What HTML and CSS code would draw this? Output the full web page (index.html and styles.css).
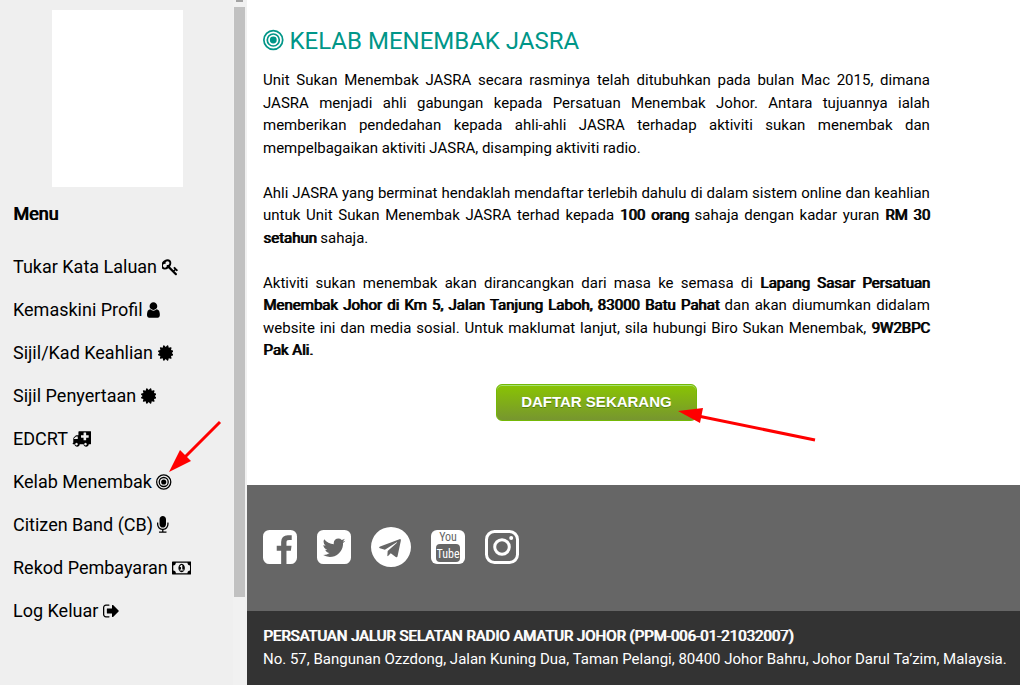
FILE: index.html
```
<!DOCTYPE html>
<html lang="ms">
<head>
    <meta charset="UTF-8">
    <meta name="viewport" content="width=device-width, initial-scale=1.0">
    <title>Kelab Menembak JASRA</title>
    <link rel="stylesheet" href="styles.css">
</head>
<body>
    <!-- Sidebar -->
    <aside class="sidebar">
        <nav class="menu">
            <div class="photo"></div>
            <h2>Menu</h2>
            <a href="#">Tukar Kata Laluan <svg class="icon" viewBox="96 0 1664 1792"><path d="M832 512q0-80-56-136t-136-56-136 56-56 136q0 42 19 83-41-19-83-19-80 0-136 56t-56 136 56 136 136 56 136-56 56-136q0-42-19-83 41 19 83 19 80 0 136-56t56-136zm851 704q0 17-49 66t-66 49q-9 0-28.500-16t-36.500-33-38.500-40-24.500-26l-96 96 220 220q28 28 28 68 0 42-39 81t-81 39q-40 0-68-28l-671-671q-176 131-365 131-163 0-265.500-102.500t-102.500-265.500q0-160 95-313t248-248 313-95q163 0 265.500 102.500t102.500 265.500q0 189-131 365l355 355 96-96q-3-3-26-24.500t-40-38.500-33-36.500-16-28.500q0-17 49-66t66-49q13 0 23 10 6 6 46 44.500t82 79.500 86.500 86 73 78 28.500 41z"/></svg></a>
            <a href="#">Kemaskini Profil <svg class="icon" viewBox="256 0 1280 1792"><path d="M1536 1399q0 109-62.500 187t-150.500 78h-854q-88 0-150.500-78t-62.500-187q0-85 8.500-160.500t31.500-152 58.500-131 94-89 134.500-34.500q131 128 313 128t313-128q76 0 134.500 34.500t94 89 58.500 131 31.500 152 8.500 160.500zm-256-887q0 159-112.500 271.500t-271.500 112.500-271.500-112.500-112.500-271.500 112.500-271.500 271.500-112.500 271.500 112.500 112.500 271.500z"/></svg></a>
            <a href="#">Sijil/Kad Keahlian <svg class="icon" viewBox="128 0 1536 1792"><path id="certificate" d="M1504 896l138 135q30 28 20 70-12 41-52 51l-188 48 53 186q12 41-19 70-29 31-70 19l-186-53-48 188q-10 40-51 52-12 2-19 2-31 0-51-22l-135-138-135 138q-28 30-70 20-41-11-51-52l-48-188-186 53q-41 12-70-19-31-29-19-70l53-186-188-48q-40-10-52-51-10-42 20-70l138-135-138-135q-30-28-20-70 12-41 52-51l188-48-53-186q-12-41 19-70 29-31 70-19l186 53 48-188q10-41 51-51 41-12 70 19l135 139 135-139q29-30 70-19 41 10 51 51l48 188 186-53q41-12 70 19 31 29 19 70l-53 186 188 48q40 10 52 51 10 42-20 70z"/></svg></a>
            <a href="#">Sijil Penyertaan <svg class="icon" viewBox="128 0 1536 1792"><use href="#certificate"/></svg></a>
            <a href="#">EDCRT <svg class="icon" viewBox="0 0 1920 1792"><path d="M576 1408q0-52-38-90t-90-38-90 38-38 90 38 90 90 38 90-38 38-90zm-384-512h384v-256h-158q-14 2-22 9l-195 195q-7 12-9 22v30zm1280 512q0-52-38-90t-90-38-90 38-38 90 38 90 90 38 90-38 38-90zm192-672v-192q0-14-9-23t-23-9h-224v-224q0-14-9-23t-23-9h-192q-14 0-23 9t-9 23v224h-224q-14 0-23 9t-9 23v192q0 14 9 23t23 9h224v224q0 14 9 23t23 9h192q14 0 23-9t9-23v-224h224q14 0 23-9t9-23zm256-480v1088q0 26-19 45t-45 19h-192q0 106-75 181t-181 75-181-75-75-181h-384q0 106-75 181t-181 75-181-75-75-181h-128q-26 0-45-19t-19-45 19-45 45-19v-416q0-26 13-58t32-51l198-198q19-19 51-32t58-13h160v-320q0-26 19-45t45-19h1152q26 0 45 19t19 45z"/></svg></a>
            <a href="#" class="current">Kelab Menembak <svg class="icon" viewBox="128 0 1536 1792"><g id="bullseye"><circle cx="896" cy="896" r="256"/><circle cx="896" cy="896" r="448" fill="none" stroke="currentColor" stroke-width="128"/><circle cx="896" cy="896" r="704" fill="none" stroke="currentColor" stroke-width="128"/></g></svg><svg class="arrow arrow-menu" viewBox="0 0 54 54"><path d="M52 2L14 40" stroke="#f00" stroke-width="3"/><path d="M1 52L12 30L23 41z" fill="#f00"/></svg></a>
            <a href="#">Citizen Band (CB) <svg class="icon" viewBox="320 0 1152 1792"><path d="M1472 704v128q0 221-147.500 384.500t-364.500 187.500v132h256q26 0 45 19t19 45-19 45-45 19h-640q-26 0-45-19t-19-45 19-45 45-19h256v-132q-217-24-364.500-187.500t-147.500-384.500v-128q0-26 19-45t45-19 45 19 19 45v128q0 185 131.500 316.500t316.500 131.500 316.500-131.500 131.500-316.500v-128q0-26 19-45t45-19 45 19 19 45zm-256-384v512q0 132-94 226t-226 94-226-94-94-226v-512q0-132 94-226t226-94 226 94 94 226z"/></svg></a>
            <a href="#">Rekod Pembayaran <svg class="icon" viewBox="0 0 1920 1792"><path d="M768 1152h384v-96h-128v-448h-114l-148 137 77 80q42-37 55-57h2v288h-128v96zm512-256q0 70-21 142t-59.500 134-101.500 101-138 39-138-39-101.500-101-59.500-134-21-142 21-142 59.500-134 101.500-101 138-39 138 39 101.500 101 59.500 134 21 142zm512 256v-512q-106 0-181-75t-75-181h-1152q0 106-75 181t-181 75v512q106 0 181 75t75 181h1152q0-106 75-181t181-75zm128-832v1152q0 26-19 45t-45 19h-1792q-26 0-45-19t-19-45v-1152q0-26 19-45t45-19h1792q26 0 45 19t19 45z"/></svg></a>
            <a href="#">Log Keluar <svg class="icon" viewBox="64 0 1568 1792"><path d="M704 1440q0 4 1 20t.5 26.500-3 23.500-10 19.500-20.500 6.500h-320q-119 0-203.500-84.500t-84.500-203.500v-704q0-119 84.500-203.500t203.500-84.500h320q13 0 22.500 9.500t9.500 22.500q0 4 1 20t.5 26.500-3 23.500-10 19.500-20.500 6.500h-320q-66 0-113 47t-47 113v704q0 66 47 113t113 47h312l11.500 1 11.500 3 8 5.500 7 9 2 13.500zm928-544q0 26-19 45l-544 544q-19 19-45 19t-45-19-19-45v-288h-448q-26 0-45-19t-19-45v-384q0-26 19-45t45-19h448v-288q0-26 19-45t45-19 45 19l544 544q19 19 19 45z"/></svg></a>
        </nav>
        <div class="scrollbar">
            <div class="scroll-up"></div>
            <div class="thumb"></div>
        </div>
    </aside>

    <!-- Page content -->
    <div class="page">
        <main class="content">
            <h1><svg class="icon" viewBox="128 0 1536 1792"><use href="#bullseye"/></svg> KELAB MENEMBAK JASRA</h1>
            <div class="article">
                <p>Unit Sukan Menembak JASRA secara rasminya telah ditubuhkan pada bulan Mac 2015, dimana JASRA menjadi ahli gabungan kepada Persatuan Menembak Johor. Antara tujuannya ialah memberikan pendedahan kepada ahli-ahli JASRA terhadap aktiviti sukan menembak dan mempelbagaikan aktiviti JASRA, disamping aktiviti radio.</p>
                <p>Ahli JASRA yang berminat hendaklah mendaftar terlebih dahulu di dalam sistem online dan keahlian untuk Unit Sukan Menembak JASRA terhad kepada <b>100 orang</b> sahaja dengan kadar yuran <b>RM 30 setahun</b> sahaja.</p>
                <p>Aktiviti sukan menembak akan dirancangkan dari masa ke semasa di <b>Lapang Sasar Persatuan Menembak Johor di Km 5, Jalan Tanjung Laboh, 83000 Batu Pahat</b> dan akan diumumkan didalam website ini dan media sosial. Untuk maklumat lanjut, sila hubungi Biro Sukan Menembak, <b>9W2BPC Pak Ali.</b></p>
                <div class="action">
                    <button type="button">DAFTAR SEKARANG</button>
                    <svg class="arrow arrow-button" viewBox="0 0 140 36"><path d="M137 32L20 8" stroke="#f00" stroke-width="3"/><path d="M0 3L25 0L22 15z" fill="#f00"/></svg>
                </div>
            </div>
        </main>

        <section class="social">
            <a href="#" aria-label="Facebook"><svg viewBox="128 0 1536 1792"><path d="M1376 128q119 0 203.500 84.500t84.500 203.500v960q0 119-84.500 203.500t-203.500 84.500h-188v-595h199l30-232h-229v-148q0-56 23.500-84t91.500-28l122-1v-207q-63-9-178-9-136 0-217.500 80t-81.500 226v171h-200v232h200v595h-532q-119 0-203.500-84.500t-84.500-203.500v-960q0-119 84.500-203.500t203.500-84.500h960z"/></svg></a>
            <a href="#" aria-label="Twitter"><svg viewBox="128 0 1536 1792"><path d="M1408 610q-56 25-121 34 68-40 93-117-65 38-134 51-61-66-153-66-87 0-148.500 61.500t-61.500 148.500q0 29 5 48-129-7-242-65t-192-155q-29 50-29 106 0 114 91 175-47-1-100-26v2q0 75 50 133.500t123 72.500q-29 8-51 8-13 0-39-4 21 63 74.500 104t121.500 42q-116 90-261 90-26 0-50-3 148 94 322 94 112 0 210-35.500t168-95 120.500-137 75-162 24.500-168.500q0-18-1-27 63-45 105-109zm256-194v960q0 119-84.500 203.500t-203.500 84.500h-960q-119 0-203.500-84.500t-84.500-203.500v-960q0-119 84.500-203.500t203.500-84.500h960q119 0 203.500 84.500t84.500 203.500z"/></svg></a>
            <a href="#" aria-label="Telegram"><svg class="round" viewBox="0 0 1792 1792"><path d="M1189 1307l147-693q9-44-10.500-63t-51.500-7l-864 333q-29 11-39.500 25t-2.500 26.500 32 19.500l221 69 513-323q21-14 32-6 7 5-4 15l-415 375-16 228q23 0 45-22l108-104 224 165q64 36 81-38zm603-411q0 182-71 348t-191 286-286 191-348 71-348-71-286-191-191-286-71-348 71-348 191-286 286-191 348-71 348 71 286 191 191 286 71 348z"/></svg></a>
            <a href="#" aria-label="YouTube"><svg viewBox="0 0 34 40"><rect y="3" width="34" height="34" rx="6"/><rect x="5" y="17" width="24" height="18" rx="4" fill="#666"/><text class="you" x="17" y="14">You</text><text class="tube" x="17" y="31">Tube</text></svg></a>
            <a href="#" aria-label="Instagram"><svg viewBox="0 0 34 40"><rect x="1.500" y="4.500" width="31" height="31" rx="8" fill="none" stroke="#fff" stroke-width="3"/><circle cx="17" cy="20" r="7.300" fill="none" stroke="#fff" stroke-width="3"/><circle cx="26.200" cy="10.900" r="2"/></svg></a>
        </section>

        <footer>
            <b>PERSATUAN JALUR SELATAN RADIO AMATUR JOHOR (PPM-006-01-21032007)</b><br>
            No. 57, Bangunan Ozzdong, Jalan Kuning Dua, Taman Pelangi, 80400 Johor Bahru, Johor Darul Ta’zim, Malaysia.
        </footer>
    </div>
</body>
</html>
```
FILE: styles.css
```
* {
    box-sizing: border-box;
}

body {
    margin: 0;
    min-height: 100vh;
    display: flex;
    font-family: Roboto, sans-serif;
    font-size: 15px;
    line-height: 1.5;
    color: #000;
    background: #fff;
}

/* the heavier text keeps the regular letter widths */
b,
.menu h2 {
    font-weight: 400;
    text-shadow: 1px 0 0 currentColor;
}

.icon {
    height: 1em;
    vertical-align: -3px;
    fill: currentColor;
}

/* Sidebar */
.sidebar {
    width: 247px;
    flex-shrink: 0;
    display: flex;
    background: #efefef;
}

.menu {
    flex: 1;
    padding: 10px 0 0 13px;
    font-size: 18px;
}

.photo {
    width: 131px;
    height: 177px;
    margin-left: 39px;
    background: #fff;
}

.menu h2 {
    margin: 13px 0 18px;
    font-size: 18px;
}

.menu a {
    display: block;
    width: fit-content;
    padding: 8px 0;
    color: #000;
    text-decoration: none;
}

.menu .current {
    position: relative;
}

.scrollbar {
    width: 14px;
    padding: 0 2px 0 1px;
    background: #f1f1f1;
}

.scroll-up {
    width: 7px;
    height: 2px;
    margin: 0 2px 5px;
    background: #a3a3a3;
}

.thumb {
    height: 590px;
    background: #c1c1c1;
}

/* Page content */
.page {
    flex: 1;
    min-width: 0;
    display: flex;
    flex-direction: column;
}

.content {
    flex: 1;
    padding: 23px 16px 64px;
}

h1 {
    margin: 0 0 10px;
    font-size: 24px;
    font-weight: 400;
    color: #009688;
}

.article {
    width: 90%;
    text-align: justify;
}

.article p {
    margin: 0 0 1.5em;
}

.action {
    position: relative;
    width: fit-content;
    margin: 0 auto;
}

button {
    display: block;
    padding: 8px 24px 10px;
    border: 1px solid #74b807;
    border-radius: 6px;
    background: linear-gradient(#89c403, #77962f);
    box-shadow: inset 0 1px 0 #a4e271;
    color: #fff;
    font: bold 15px "Liberation Sans", sans-serif;
    text-shadow: 0 1px 0 #528009;
}

/* Pointers drawn over the page */
.arrow {
    position: absolute;
    fill: none;
}

.arrow-menu {
    left: 155px;
    top: -40px;
    width: 54px;
}

.arrow-button {
    left: 182px;
    top: 24px;
    width: 140px;
}

/* Social links */
.social {
    display: flex;
    gap: 20px;
    padding: 42px 16px;
    background: #666;
}

.social a {
    height: 42px;
}

.social svg {
    display: block;
    width: 34px;
    height: 40px;
    fill: #fff;
}

.social .round {
    width: 40px;
}

.social text {
    font-family: "Roboto Condensed", "Open Sans Condensed", "DejaVu Sans Condensed", sans-serif;
    font-size: 12px;
    text-anchor: middle;
}

.social .you {
    fill: #666;
}

footer {
    padding: 14px 0 15px 16px;
    background: #333;
    color: #fff;
}
```
